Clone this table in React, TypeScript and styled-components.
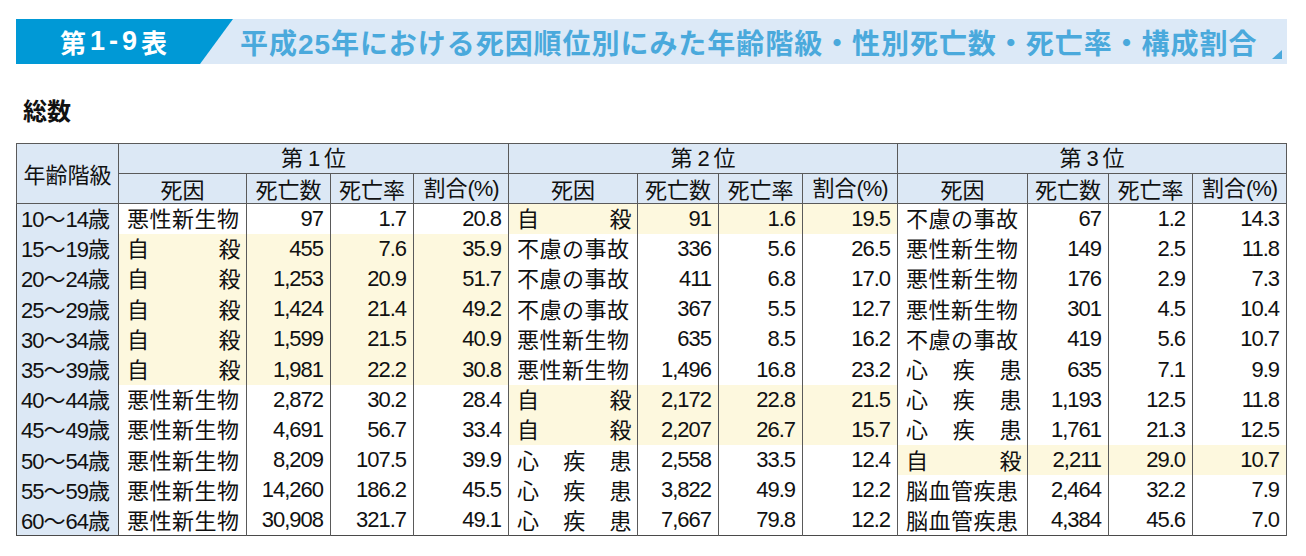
import React from "react";
import styled, { createGlobalStyle } from "styled-components";

const GlobalStyle = createGlobalStyle`
  html, body { margin: 0; padding: 0; background: #ffffff; }
  body { font-family: "Noto Sans CJK JP", "Noto Sans", sans-serif; color: #111; }
`;

const NUM_FONT = `"Liberation Sans", "Noto Sans CJK JP", sans-serif`;

const Page = styled.div`
  padding: 19px 0 0 16px;
  width: 1271px;
`;

const TitleBar = styled.div`
  display: flex;
  align-items: center;
  height: 45px;
  background: #dce9f7;
`;

const Label = styled.div`
  width: 217px;
  height: 100%;
  box-sizing: border-box;
  padding-left: 44px;
  display: flex;
  align-items: center;
  background: #0099d6;
  clip-path: polygon(0 0, 100% 0, calc(100% - 33px) 100%, 0 100%);
  color: #fff;
  font-weight: 700;
  font-size: 26px;
  letter-spacing: 4px;
`;

const LabelNum = styled.span`
  font-family: "Liberation Sans", sans-serif;
  font-weight: 700;
  font-size: 27px;
`;

const Title = styled.div`
  flex: 1;
  margin-left: 7px;
  color: #4aa9dc;
  font-weight: 700;
  font-size: 28px;
  letter-spacing: 0.95px;
  white-space: nowrap;
`;

const TitleNum = styled.span`
  font-family: "Liberation Sans", sans-serif;
  font-weight: 700;
`;

const Corner = styled.svg`
  align-self: flex-end;
  margin: 0 5px 5px 0;
  flex: none;
`;

const Subtitle = styled.h2`
  margin: 28px 0 0 7px;
  height: 51px;
  font-size: 24px;
  font-weight: 700;
  line-height: 36px;
  color: #111;
`;

const Table = styled.table`
  width: 1270px;
  table-layout: fixed;
  border-collapse: collapse;
  border: 1px solid #4a4a4a;
`;

const HeadCell = styled.th`
  background: #dce8f5;
  border: 1px solid #5a5a5a;
  font-weight: 400;
  font-size: 22px;
  line-height: 24px;
  padding: 0 0 2px;
  text-align: center;
  color: #111;
  white-space: nowrap;
`;

const Narrow = styled.span`
  font-family: ${NUM_FONT};
  letter-spacing: -1px;
`;

const HeadRow = styled.tr<{ $h: number }>`
  height: ${(p) => p.$h}px;
`;

const DataRow = styled.tr`
  height: 30.2px;
`;

const AgeCell = styled.td`
  background: #dce8f5;
  border-left: 1px solid #4a4a4a;
  border-right: 1px solid #4a4a4a;
  font-size: 22px;
  line-height: 24px;
  padding: 0 0 0 4px;
  white-space: nowrap;
`;

const CauseCell = styled.td<{ $hl: boolean }>`
  background: ${(p) => (p.$hl ? "#fdf8de" : "#ffffff")};
  border-left: 1px solid #5a5a5a;
  border-right: 1px solid #5a5a5a;
  padding: 0 5px 3px 8px;
  font-size: 22px;
  letter-spacing: 0.5px;
  line-height: 24px;
  white-space: nowrap;
`;

const Spread = styled.div`
  display: flex;
  justify-content: space-between;
`;

const NumCell = styled.td<{ $hl: boolean }>`
  background: ${(p) => (p.$hl ? "#fdf8de" : "#ffffff")};
  border-left: 1px solid #5a5a5a;
  border-right: 1px solid #5a5a5a;
  padding: 0 7px 0 0;
  text-align: right;
  font-family: ${NUM_FONT};
  font-size: 22px;
  letter-spacing: -1px;
  line-height: 24px;
  white-space: nowrap;
`;

type Entry = [string, string, string, string];
type Row = [string, string, Entry, Entry, Entry];

const rows: Row[] = [
  ["10", "14", ["悪性新生物", "97", "1.7", "20.8"], ["自殺", "91", "1.6", "19.5"], ["不慮の事故", "67", "1.2", "14.3"]],
  ["15", "19", ["自殺", "455", "7.6", "35.9"], ["不慮の事故", "336", "5.6", "26.5"], ["悪性新生物", "149", "2.5", "11.8"]],
  ["20", "24", ["自殺", "1,253", "20.9", "51.7"], ["不慮の事故", "411", "6.8", "17.0"], ["悪性新生物", "176", "2.9", "7.3"]],
  ["25", "29", ["自殺", "1,424", "21.4", "49.2"], ["不慮の事故", "367", "5.5", "12.7"], ["悪性新生物", "301", "4.5", "10.4"]],
  ["30", "34", ["自殺", "1,599", "21.5", "40.9"], ["悪性新生物", "635", "8.5", "16.2"], ["不慮の事故", "419", "5.6", "10.7"]],
  ["35", "39", ["自殺", "1,981", "22.2", "30.8"], ["悪性新生物", "1,496", "16.8", "23.2"], ["心疾患", "635", "7.1", "9.9"]],
  ["40", "44", ["悪性新生物", "2,872", "30.2", "28.4"], ["自殺", "2,172", "22.8", "21.5"], ["心疾患", "1,193", "12.5", "11.8"]],
  ["45", "49", ["悪性新生物", "4,691", "56.7", "33.4"], ["自殺", "2,207", "26.7", "15.7"], ["心疾患", "1,761", "21.3", "12.5"]],
  ["50", "54", ["悪性新生物", "8,209", "107.5", "39.9"], ["心疾患", "2,558", "33.5", "12.4"], ["自殺", "2,211", "29.0", "10.7"]],
  ["55", "59", ["悪性新生物", "14,260", "186.2", "45.5"], ["心疾患", "3,822", "49.9", "12.2"], ["脳血管疾患", "2,464", "32.2", "7.9"]],
  ["60", "64", ["悪性新生物", "30,908", "321.7", "49.1"], ["心疾患", "7,667", "79.8", "12.2"], ["脳血管疾患", "4,384", "45.6", "7.0"]],
];

const colWidths = [102, 128, 84, 83, 95, 129, 81, 84, 95, 130, 81, 84, 94];

function Cause({ name }: { name: string }) {
  if (name.length < 5) {
    return (
      <Spread>
        {name.split("").map((c, i) => (
          <span key={i}>{c}</span>
        ))}
      </Spread>
    );
  }
  return <>{name}</>;
}

function Group({ e }: { e: Entry }) {
  const hl = e[0] === "自殺";
  return (
    <>
      <CauseCell $hl={hl}>
        <Cause name={e[0]} />
      </CauseCell>
      <NumCell $hl={hl}>{e[1]}</NumCell>
      <NumCell $hl={hl}>{e[2]}</NumCell>
      <NumCell $hl={hl}>{e[3]}</NumCell>
    </>
  );
}

function SubHeads() {
  return (
    <>
      <HeadCell>死因</HeadCell>
      <HeadCell>死亡数</HeadCell>
      <HeadCell>死亡率</HeadCell>
      <HeadCell>
        割合<Narrow>(%)</Narrow>
      </HeadCell>
    </>
  );
}

export default function App() {
  return (
    <>
      <GlobalStyle />
      <Page>
        <TitleBar>
          <Label>
            第<LabelNum>1-9</LabelNum>表
          </Label>
          <Title>
            平成<TitleNum>25</TitleNum>年における死因順位別にみた年齢階級・性別死亡数・死亡率・構成割合
          </Title>
          <Corner width="10" height="9" viewBox="0 0 10 9">
            <polygon points="10,0 10,9 0,9" fill="#4aa9dc" />
          </Corner>
        </TitleBar>
        <Subtitle>総数</Subtitle>
        <Table>
          <colgroup>
            {colWidths.map((w, i) => (
              <col key={i} style={{ width: w }} />
            ))}
          </colgroup>
          <thead>
            <HeadRow $h={29}>
              <HeadCell rowSpan={2}>年齢階級</HeadCell>
              <HeadCell colSpan={4}>
                第 <Narrow>1</Narrow> 位
              </HeadCell>
              <HeadCell colSpan={4}>
                第 <Narrow>2</Narrow> 位
              </HeadCell>
              <HeadCell colSpan={4}>
                第 <Narrow>3</Narrow> 位
              </HeadCell>
            </HeadRow>
            <HeadRow $h={30}>
              <SubHeads />
              <SubHeads />
              <SubHeads />
            </HeadRow>
          </thead>
          <tbody>
            {rows.map((r) => (
              <DataRow key={r[0]}>
                <AgeCell>
                  <Narrow>{r[0]}</Narrow>～<Narrow>{r[1]}</Narrow>歳
                </AgeCell>
                <Group e={r[2]} />
                <Group e={r[3]} />
                <Group e={r[4]} />
              </DataRow>
            ))}
          </tbody>
        </Table>
      </Page>
    </>
  );
}
